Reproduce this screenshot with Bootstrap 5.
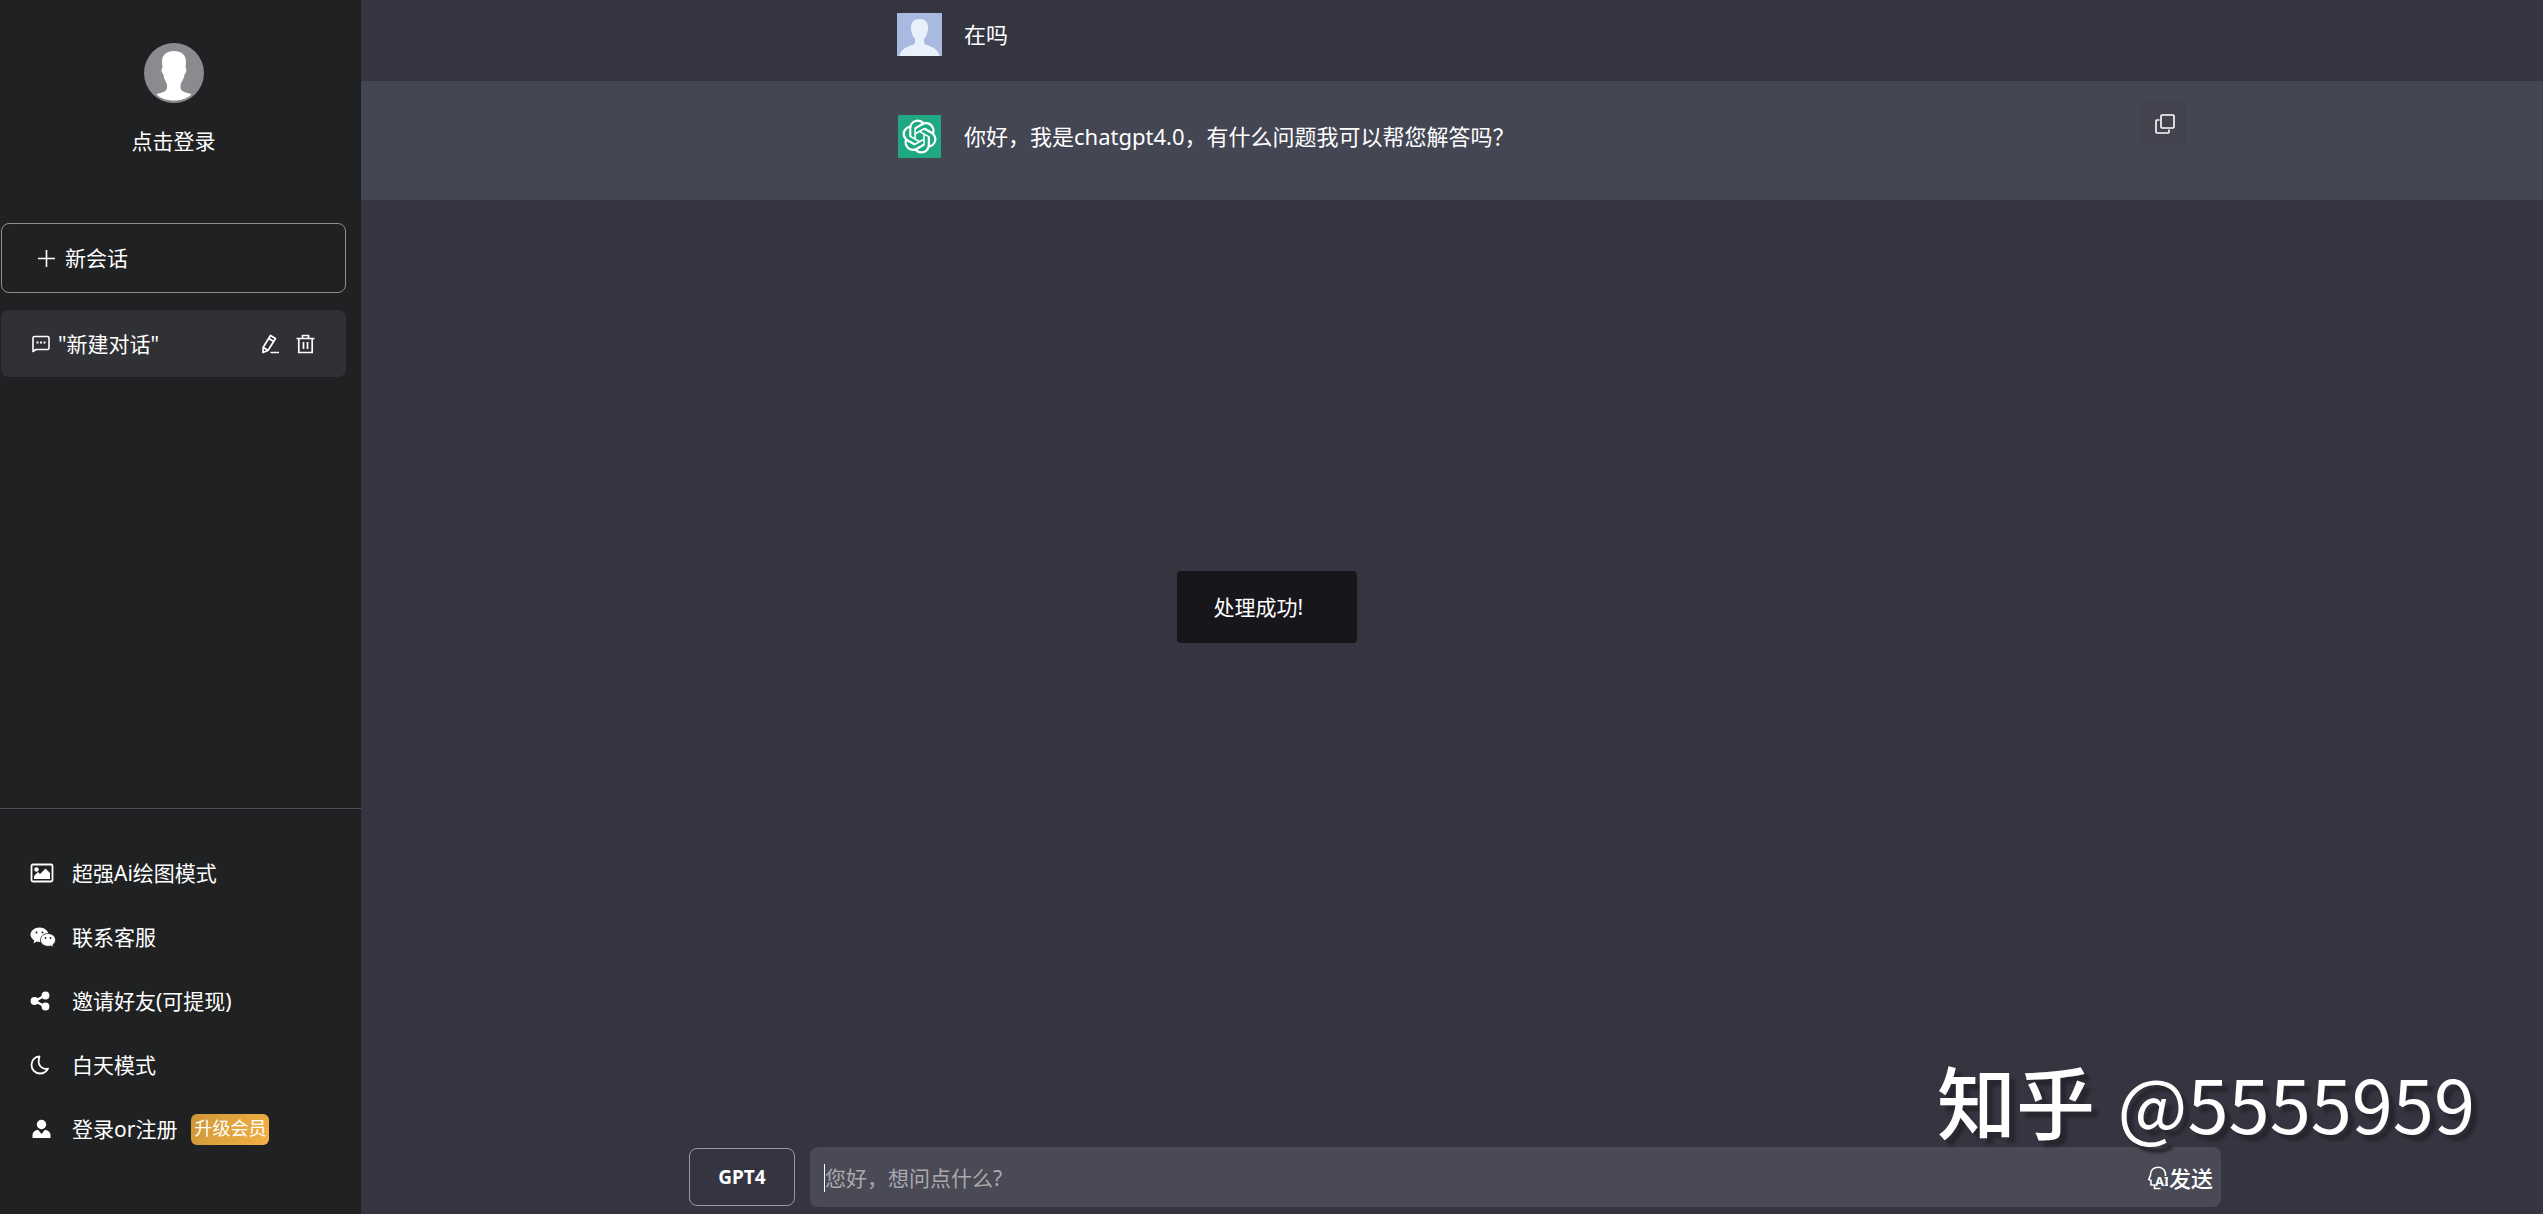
<!DOCTYPE html>
<html lang="zh-CN">
<head>
<meta charset="utf-8">
<meta name="viewport" content="width=device-width, initial-scale=1">
<title>ChatGPT 4.0</title>
<link href="https://cdn.jsdelivr.net/npm/bootstrap@5.3.0/dist/css/bootstrap.min.css" rel="stylesheet">
<style>
  body { font: 21px/32px "Noto Sans", "Noto Sans CJK SC", sans-serif; background: #353541; color: #fff; }
  button, input { font: inherit; color: inherit; }
  button { background: none; border: 0; padding: 0; }
  svg { display: block; flex: none; }
  .side-panel { width: 361px; background: #202123; }
  .profile-link { padding: 43px 14px 0 0; gap: 22px; margin-bottom: 66px; }
  .side-item { width: 345px; margin-left: 1px; border-radius: 8px; }
  .new-chat { height: 70px; border: 1px solid #8e8f91; padding-left: 35px; gap: 9px; margin-bottom: 17px; }
  .chat-entry { height: 67px; background: #303134; padding: 0 31px; }
  .side-menu { border-top: 1px solid #4e4f52; padding: 48px 0 69px 30px; gap: 32px; }
  .side-menu a { height: 32px; }
  .menu-icon { width: 42px; }
  .side-menu .vip-tag { height: 31px; width: 78px; margin-left: 14px; border-radius: 6px; font-size: 18px; line-height: 29px; text-align: center; background: linear-gradient(120deg, #cf9636, #f3b146); }
  .wide-col { width: 100%; max-width: 1538px; margin: 0 auto; padding-left: 6px; }
  .message { font-size: 22px; }
  .message .wide-col { padding-left: 214px; padding-right: 35px; }
  .message-user { padding: 13px 0 25px; }
  .message-bot { background: #444654; height: 119px; padding-top: 21px; }
  .message-text { margin-left: 22px; line-height: 43px; }
  .bot-line { padding-top: 13px; }
  .copy-btn { width: 45px; height: 43px; background: #42434f; padding-left: 14px; border-radius: 4px; }
  .composer { padding-bottom: 7px; }
  .model-btn { width: 106px; height: 58px; border: 1px solid #9a9aa2; border-radius: 8px; font-size: 19px; font-weight: 700; margin-right: 15px; }
  .prompt-box { height: 60px; background: #4a4a56; border-radius: 8px; padding: 2px 8px 0 14px; }
  .prompt-box input { background: none; border: 0; outline: 0; padding: 0; min-width: 0; }
  .prompt-box input::placeholder { color: #a9a9ad; opacity: 1; }
  .caret { width: 1px; height: 28px; background: #fff; }
  .send-btn { font-size: 22px; font-weight: 500; gap: 1px; }
  .notice-layer { position: fixed; inset: 0; padding-right: 10px; pointer-events: none; }
  .notice { width: 180px; height: 72px; padding-left: 37px; background: #17171b; border-radius: 4px; }
  .watermark { position: absolute; right: 68px; bottom: 57px; font: 74px/110px "Noto Sans CJK SC", sans-serif; text-shadow: 6px 6px 3px #26262e; white-space: pre; pointer-events: none; }
  .watermark b { font-size: 79px; font-weight: 500; margin-right: 6px; }
</style>
<script src="https://cdn.jsdelivr.net/npm/bootstrap@5.3.0/dist/js/bootstrap.bundle.min.js"></script>
</head>
<body>
<div class="d-flex vh-100 overflow-hidden">
  <aside class="side-panel d-flex flex-column flex-shrink-0">
    <a href="#" class="profile-link d-flex flex-column align-items-center text-white text-decoration-none">
      <svg width="60" height="60" viewBox="0 0 60 60"><circle cx="30" cy="30" r="30" fill="#8b8b8f"/><path fill="#fff" d="M30 8c7 0 12 4 12 10l-.5 7c1.500 0 1 5-.8 6-.8 6-3.700 8-4.200 11-.5 6 2 7 11 9-3 4-10 6.500-17.500 6.500S15 55 12.500 51c9-2 11-3 10.500-9-.5-3-3-5-3.700-11-1.800-1-2.300-6-.8-6L18 18c0-6 5-10 12-10z"/></svg>
      <span>点击登录</span>
    </a>
    <button type="button" class="side-item new-chat d-flex align-items-center">
      <svg width="19" height="19" viewBox="0 0 19 19" stroke="#fff" stroke-width="1.600"><path d="M9.500 1v17M1 9.500h17"/></svg>
      <span>新会话</span>
    </button>
    <div class="side-item chat-entry d-flex align-items-center">
      <svg width="18" height="18" viewBox="0 0 18 18" fill="none" stroke="#fff" stroke-width="1.600"><path d="M1 16.500V3q0-1.500 1.500-1.500h13Q17 1.500 17 3v10q0 1.500-1.500 1.500H4z" stroke-linejoin="round"/><path d="M4.500 7.500h2m1.500 0h2m1.500 0h2" stroke-width="2"/></svg>
      <a href="#" class="text-white text-decoration-none flex-grow-1 ps-2">"新建对话"</a>
      <button type="button" aria-label="编辑"><svg width="19" height="20" viewBox="0 0 19 20" fill="none" stroke="#fff" stroke-width="1.700" stroke-linejoin="round"><path d="M9.500 1.500l5 3L7 16.500 2 18.500l.2-5.200zM7.800 4.500l5 3M2.500 13.500l4.500 3M9.500 18.500H18"/></svg></button>
      <button type="button" class="ms-3" aria-label="删除"><svg width="19" height="20" viewBox="0 0 19 20" fill="none" stroke="#fff" stroke-width="1.700"><path d="M.5 4.500h18M6.500 4V1.500h6V4M2.800 4.500v14h13.400v-14M7.500 8v7M11.500 8v7"/></svg></button>
    </div>
    <nav class="side-menu mt-auto d-flex flex-column" aria-label="菜单">
      <a href="#" class="d-flex align-items-center text-white text-decoration-none"><span class="menu-icon"><svg width="24" height="20" viewBox="0 0 24 20"><rect x="1.500" y="1.500" width="21" height="17" rx="1.500" fill="none" stroke="#fff" stroke-width="1.800"/><circle cx="6.500" cy="6.500" r="2.200" fill="#fff"/><path fill="#fff" d="M4 16v-3l4-4 2 2 5.500-5.500L20 10v6z"/></svg></span>超强Ai绘图模式</a>
      <a href="#" class="d-flex align-items-center text-white text-decoration-none"><span class="menu-icon"><svg width="26" height="21" viewBox="0 0 26 21"><path fill="#fff" d="M9.500.5c5 0 9 3.300 9 7.300s-4 7.200-9 7.200q-1.500 0-3-.4L3.500 16.500l.8-3C2 12 .5 10 .5 7.800.5 3.800 4.500.5 9.500.5z"/><path fill="#fff" stroke="#202123" stroke-width=".8" d="M18 6.500c4.200 0 7.500 2.900 7.500 6.500 0 2-1.100 3.600-2.700 4.800l.6 2.500-2.800-1.400q-1.200.4-2.600.4c-4.200 0-7.500-2.800-7.500-6.300S13.800 6.500 18 6.500z"/><g fill="#202123"><circle cx="6.500" cy="5.500" r="1"/><circle cx="12.500" cy="5.500" r="1"/><circle cx="15.500" cy="11" r=".9"/><circle cx="20.500" cy="11" r=".9"/></g></svg></span>联系客服</a>
      <a href="#" class="d-flex align-items-center text-white text-decoration-none"><span class="menu-icon"><svg width="20" height="20" viewBox="0 0 20 20" fill="#fff"><path d="M15 4.500L5 10l10 5.500" fill="none" stroke="#fff" stroke-width="2.400"/><circle cx="15.500" cy="4.500" r="3.900"/><circle cx="4.500" cy="10" r="3.900"/><circle cx="15.500" cy="15.500" r="3.900"/></svg></span>邀请好友(可提现)</a>
      <a href="#" class="d-flex align-items-center text-white text-decoration-none"><span class="menu-icon"><svg width="20" height="20" viewBox="0 0 20 20" fill="none" stroke="#fff" stroke-width="1.800" stroke-linejoin="round"><path d="M9.500 1.500C4.500 1.500 1.500 5.500 1.500 10a8.500 8.500 0 0 0 8.500 8.500c3.500 0 6.500-2 8-5C12 15 6.500 10 9.500 1.500z"/></svg></span>白天模式</a>
      <div class="d-flex align-items-center">
        <a href="#" class="d-flex align-items-center text-white text-decoration-none"><span class="menu-icon"><svg width="22" height="20" viewBox="0 0 22 20" fill="#fff"><circle cx="11.500" cy="5.500" r="4.700"/><path d="M2.500 19v-3q0-4 5.500-5.200l3.500 4.200 3.500-4.200Q20.500 12 20.500 16v3z"/></svg></span>登录or注册</a>
        <a href="#" class="vip-tag text-white text-decoration-none">升级会员</a>
      </div>
    </nav>
  </aside>

  <main class="d-flex flex-column flex-grow-1 position-relative">
    <section class="message message-user">
      <div class="wide-col d-flex">
        <svg width="45" height="43" viewBox="0 0 45 43"><path fill="#a9b9df" d="M0 0h45v43H0z"/><path fill="#e8f0fb" d="M22.500 6c5.500 0 8.500 3 8.500 8.500 0 5-1.500 8.500-4 11.500v4c1 3 14 3 15.500 13h-40C4 33 17 33 18 30v-4c-2.500-3-4-6.500-4-11.500C14 9 17 6 22.500 6z"/></svg>
        <div class="message-text">在吗</div>
      </div>
    </section>
    <section class="message message-bot">
      <div class="wide-col d-flex justify-content-between align-items-start">
        <div class="bot-line d-flex">
          <svg width="45" height="43" viewBox="0 0 45 43"><rect x="1" width="43" height="43" rx="1" fill="#1ea982"/><path transform="translate(5.500 4.500) scale(1.420)" fill="#fff" d="M22.2819 9.8211a5.9847 5.9847 0 0 0-.5157-4.9108 6.0462 6.0462 0 0 0-6.5098-2.9A6.0651 6.0651 0 0 0 4.9807 4.1818a5.9847 5.9847 0 0 0-3.9977 2.9 6.0462 6.0462 0 0 0 .7427 7.0966 5.98 5.98 0 0 0 .511 4.9107 6.051 6.051 0 0 0 6.5146 2.9001A5.9847 5.9847 0 0 0 13.2599 24a6.0557 6.0557 0 0 0 5.7718-4.2058 5.9894 5.9894 0 0 0 3.9977-2.9001 6.0557 6.0557 0 0 0-.7475-7.0729zm-9.022 12.6081a4.4755 4.4755 0 0 1-2.8764-1.0408l.1419-.0804 4.7783-2.7582a.7948.7948 0 0 0 .3927-.6813v-6.7369l2.02 1.1686a.071.071 0 0 1 .038.052v5.5826a4.504 4.504 0 0 1-4.4945 4.4944zm-9.6607-4.1254a4.4708 4.4708 0 0 1-.5346-3.0137l.142.0852 4.783 2.7582a.7712.7712 0 0 0 .7806 0l5.8428-3.3685v2.3324a.0804.0804 0 0 1-.0332.0615L9.74 19.9502a4.4992 4.4992 0 0 1-6.1408-1.6464zM2.3408 7.8956a4.485 4.485 0 0 1 2.3655-1.9728V11.6a.7664.7664 0 0 0 .3879.6765l5.8144 3.3543-2.0201 1.1685a.0757.0757 0 0 1-.071 0l-4.8303-2.7865A4.504 4.504 0 0 1 2.3408 7.872zm16.5963 3.8558L13.1038 8.364 15.1192 7.2a.0757.0757 0 0 1 .071 0l4.8303 2.7913a4.4944 4.4944 0 0 1-.6765 8.1042v-5.6772a.79.79 0 0 0-.407-.667zm2.0107-3.0231l-.142-.0852-4.7735-2.7818a.7759.7759 0 0 0-.7854 0L9.409 9.2297V6.8974a.0662.0662 0 0 1 .0284-.0615l4.8303-2.7866a4.4992 4.4992 0 0 1 6.6802 4.66zM8.3065 12.863l-2.02-1.1638a.0804.0804 0 0 1-.038-.0567V6.0742a4.4992 4.4992 0 0 1 7.3757-3.4537l-.142.0805L8.704 5.459a.7948.7948 0 0 0-.3927.6813zm1.0976-2.3654l2.602-1.4998 2.6069 1.4998v2.9994l-2.5974 1.4997-2.6067-1.4997Z"/></svg>
          <div class="message-text">你好，我是chatgpt4.0，有什么问题我可以帮您解答吗？</div>
        </div>
        <button type="button" class="copy-btn" aria-label="复制"><svg width="20" height="20" viewBox="0 0 20 20" fill="none" stroke="#fff" stroke-width="1.600"><rect x="6" y="1" width="13" height="13" rx="1"/><path d="M4.500 6H2q-1 0-1 1v11q0 1 1 1h11q1 0 1-1v-2.500"/></svg></button>
      </div>
    </section>

    <form class="composer wide-col mt-auto d-flex align-items-center">
      <button type="button" class="model-btn">GPT4</button>
      <div class="prompt-box d-flex align-items-center flex-grow-1">
        <span class="caret"></span>
        <input type="text" class="flex-grow-1" placeholder="您好，想问点什么?" aria-label="您好，想问点什么?">
        <button type="button" class="send-btn d-flex align-items-center">
          <svg width="20" height="24" viewBox="0 0 20 24" fill="none" stroke="#fff" stroke-width="1.600"><path d="M17.500 10C18 4.500 14.500 1.200 10.500 1.200 5.500 1.200 2.500 4.500 2.500 9L.8 13.500l2.200 1V19h3.500v3.500h6"/><text x="7" y="20" font-family="Noto Sans" font-size="13" font-weight="700" fill="#fff" stroke="none">AI</text></svg>
          <span>发送</span>
        </button>
      </div>
    </form>
    <div class="watermark"><b>知乎</b> @5555959</div>
  </main>
</div>
<div class="notice-layer d-flex align-items-center justify-content-center">
  <div class="notice d-flex align-items-center" role="status">处理成功!</div>
</div>
</body>
</html>
